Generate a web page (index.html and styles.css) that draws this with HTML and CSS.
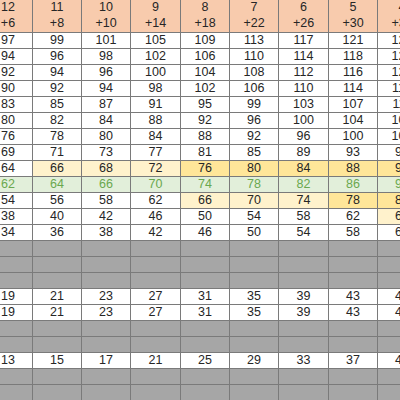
FILE: index.html
```html
<!DOCTYPE html>
<html lang="en">
<head>
    <meta charset="UTF-8">
    <meta name="viewport" content="width=device-width, initial-scale=1.0">
    <title>Score Table</title>
    <link rel="stylesheet" href="styles.css">
</head>
<body>

    <table class="grid">
        <colgroup>
            <col class="w49"><col class="w49"><col class="w49"><col class="w50"><col class="w49">
            <col class="w49"><col class="w50"><col class="w49"><col class="w49">
        </colgroup>
        <tr class="hd">
            <th>12<br>+6</th><th>11<br>+8</th><th>10<br>+10</th><th>9<br>+14</th><th>8<br>+18</th>
            <th>7<br>+22</th><th>6<br>+26</th><th>5<br>+30</th><th>4<br>+34</th>
        </tr>
        <tr><td>97</td><td>99</td><td>101</td><td>105</td><td>109</td><td>113</td><td>117</td><td>121</td><td>125</td></tr>
        <tr><td>94</td><td>96</td><td>98</td><td>102</td><td>106</td><td>110</td><td>114</td><td>118</td><td>122</td></tr>
        <tr><td>92</td><td>94</td><td>96</td><td>100</td><td>104</td><td>108</td><td>112</td><td>116</td><td>120</td></tr>
        <tr><td>90</td><td>92</td><td>94</td><td>98</td><td>102</td><td>106</td><td>110</td><td>114</td><td>118</td></tr>
        <tr><td>83</td><td>85</td><td>87</td><td>91</td><td>95</td><td>99</td><td>103</td><td>107</td><td>111</td></tr>
        <tr><td>80</td><td>82</td><td>84</td><td>88</td><td>92</td><td>96</td><td>100</td><td>104</td><td>108</td></tr>
        <tr><td>76</td><td>78</td><td>80</td><td>84</td><td>88</td><td>92</td><td>96</td><td>100</td><td>104</td></tr>
        <tr><td>69</td><td>71</td><td>73</td><td>77</td><td>81</td><td>85</td><td>89</td><td>93</td><td>97</td></tr>
        <tr>
            <td>64</td><td class="y1">66</td><td class="y1">68</td><td class="y1">72</td>
            <td class="y2">76</td><td class="y2">80</td><td class="y2">84</td><td class="y2">88</td><td class="y2">92</td>
        </tr>
        <tr class="ok"><td>62</td><td>64</td><td>66</td><td>70</td><td>74</td><td>78</td><td>82</td><td>86</td><td>90</td></tr>
        <tr>
            <td>54</td><td>56</td><td>58</td><td>62</td>
            <td class="y1">66</td><td class="y1">70</td><td class="y1">74</td><td class="y2">78</td><td class="y2">82</td>
        </tr>
        <tr><td>38</td><td>40</td><td>42</td><td>46</td><td>50</td><td>54</td><td>58</td><td>62</td><td class="y1">66</td></tr>
        <tr><td>34</td><td>36</td><td>38</td><td>42</td><td>46</td><td>50</td><td>54</td><td>58</td><td>62</td></tr>
        <tr class="off"><td></td><td></td><td></td><td></td><td></td><td></td><td></td><td></td><td></td></tr>
        <tr class="off"><td></td><td></td><td></td><td></td><td></td><td></td><td></td><td></td><td></td></tr>
        <tr class="off"><td></td><td></td><td></td><td></td><td></td><td></td><td></td><td></td><td></td></tr>
        <tr><td>19</td><td>21</td><td>23</td><td>27</td><td>31</td><td>35</td><td>39</td><td>43</td><td>47</td></tr>
        <tr><td>19</td><td>21</td><td>23</td><td>27</td><td>31</td><td>35</td><td>39</td><td>43</td><td>47</td></tr>
        <tr class="off"><td></td><td></td><td></td><td></td><td></td><td></td><td></td><td></td><td></td></tr>
        <tr class="off"><td></td><td></td><td></td><td></td><td></td><td></td><td></td><td></td><td></td></tr>
        <tr><td>13</td><td>15</td><td>17</td><td>21</td><td>25</td><td>29</td><td>33</td><td>37</td><td>41</td></tr>
        <tr class="off"><td></td><td></td><td></td><td></td><td></td><td></td><td></td><td></td><td></td></tr>
        <tr class="off"><td></td><td></td><td></td><td></td><td></td><td></td><td></td><td></td><td></td></tr>
    </table>

</body>
</html>
```

FILE: styles.css
```css
body {
    margin: 0;
    overflow: hidden;
    background: #fff;
    font-family: "Liberation Sans", Arial, sans-serif;
}
.grid {
    border-collapse: collapse;
    table-layout: fixed;
    width: 443px;
    margin: -1px 0 0 -17px;
    font-size: 12.5px;
    color: #262626;
}
.w49 {
    width: 49px;
}
.w50 {
    width: 50px;
}
.grid th,
.grid td {
    border: 1px solid #7a7a7a;
    padding: 0;
    text-align: center;
    font-weight: normal;
}
.grid td {
    height: 15px;
    line-height: 15px;
}
.hd th {
    height: 31px;
    line-height: 15.5px;
    padding-bottom: 1px;
    background: #f8cbad;
}
.y1 {
    background: #fff2cc;
}
.y2 {
    background: #ffe699;
}
.ok td {
    background: #e2efda;
    color: #6aa84f;
}
.off td {
    background: #a6a6a6;
}
```
